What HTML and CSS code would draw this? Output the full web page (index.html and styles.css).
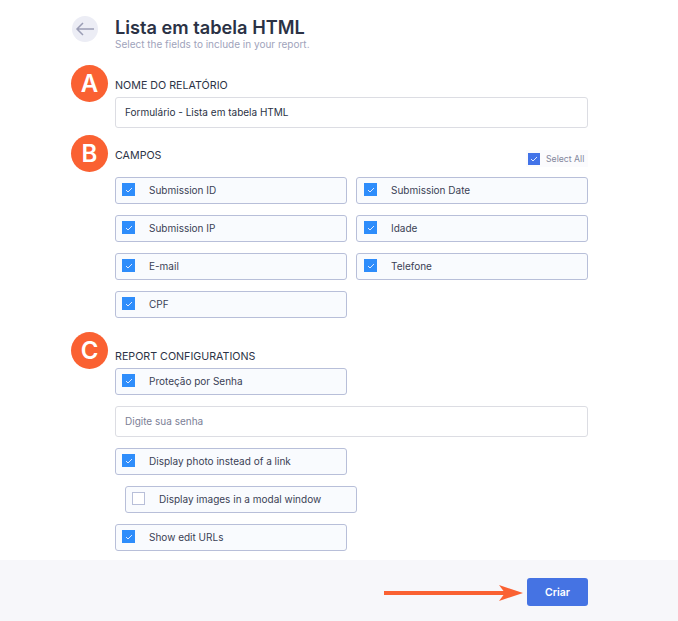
FILE: index.html
```html
<!DOCTYPE html>
<html lang="pt">
<head>
<meta charset="utf-8">
<title>Lista em tabela HTML</title>
<link rel="stylesheet" href="styles.css">
</head>
<body>
<div class="page">
  <main class="content">
    <header class="head">
      <button class="back" aria-label="Voltar">
        <svg width="20" height="14" viewBox="0 0 20 14"><path d="M19 7H2M8 1 2 7l6 6" fill="none" stroke="#9a9db5" stroke-width="1.5"/></svg>
      </button>
      <div>
        <h1 class="title">Lista em tabela HTML</h1>
        <p class="sub">Select the fields to include in your report.</p>
      </div>
    </header>

    <section class="sec sec-a">
      <span class="badge badge-a">A</span>
      <h2 class="label">NOME DO RELATÓRIO</h2>
      <div class="input">Formulário - Lista em tabela HTML</div>
    </section>

    <section class="sec sec-b">
      <span class="badge badge-b">B</span>
      <div class="label-row">
        <h2 class="label">CAMPOS</h2>
        <div class="select-all">
          <span class="box small"><svg width="8" height="6" viewBox="0 0 8 6"><path d="M1 3l2 2 4-4" fill="none" stroke="#dfe9ff" stroke-width="1"/></svg></span>
          <span>Select All</span>
        </div>
      </div>
      <div class="grid">
        <div class="opt"><span class="box"><svg width="8" height="6" viewBox="0 0 8 6"><path d="M1 3l2 2 4-4" fill="none" stroke="#dfe9ff" stroke-width="1"/></svg></span>Submission ID</div>
        <div class="opt"><span class="box"><svg width="8" height="6" viewBox="0 0 8 6"><path d="M1 3l2 2 4-4" fill="none" stroke="#dfe9ff" stroke-width="1"/></svg></span>Submission Date</div>
        <div class="opt"><span class="box"><svg width="8" height="6" viewBox="0 0 8 6"><path d="M1 3l2 2 4-4" fill="none" stroke="#dfe9ff" stroke-width="1"/></svg></span>Submission IP</div>
        <div class="opt"><span class="box"><svg width="8" height="6" viewBox="0 0 8 6"><path d="M1 3l2 2 4-4" fill="none" stroke="#dfe9ff" stroke-width="1"/></svg></span>Idade</div>
        <div class="opt"><span class="box"><svg width="8" height="6" viewBox="0 0 8 6"><path d="M1 3l2 2 4-4" fill="none" stroke="#dfe9ff" stroke-width="1"/></svg></span>E-mail</div>
        <div class="opt"><span class="box"><svg width="8" height="6" viewBox="0 0 8 6"><path d="M1 3l2 2 4-4" fill="none" stroke="#dfe9ff" stroke-width="1"/></svg></span>Telefone</div>
        <div class="opt"><span class="box"><svg width="8" height="6" viewBox="0 0 8 6"><path d="M1 3l2 2 4-4" fill="none" stroke="#dfe9ff" stroke-width="1"/></svg></span>CPF</div>
      </div>
    </section>

    <section class="sec sec-c">
      <span class="badge badge-c">C</span>
      <h2 class="label">REPORT CONFIGURATIONS</h2>
      <div class="opt single gap-s"><span class="box"><svg width="8" height="6" viewBox="0 0 8 6"><path d="M1 3l2 2 4-4" fill="none" stroke="#dfe9ff" stroke-width="1"/></svg></span>Proteção por Senha</div>
      <div class="input placeholder">Digite sua senha</div>
      <div class="opt single"><span class="box"><svg width="8" height="6" viewBox="0 0 8 6"><path d="M1 3l2 2 4-4" fill="none" stroke="#dfe9ff" stroke-width="1"/></svg></span>Display photo instead of a link</div>
      <div class="opt single nested"><span class="box empty"></span>Display images in a modal window</div>
      <div class="opt single"><span class="box"><svg width="8" height="6" viewBox="0 0 8 6"><path d="M1 3l2 2 4-4" fill="none" stroke="#dfe9ff" stroke-width="1"/></svg></span>Show edit URLs</div>
    </section>
  </main>

  <footer class="foot">
    <svg class="arrow" width="139" height="16" viewBox="0 0 139 16"><path d="M0 6h121v4H0zM115 0l24 8-24 8 6-8z" fill="#fa6132"/></svg>
    <button class="create">Criar</button>
  </footer>
</div>
</body>
</html>
```
FILE: styles.css
```css
* { box-sizing: border-box; }
html, body { margin: 0; padding: 0; background: #fff; }
body { font-family: Inter, "Open Sans", sans-serif; color: #2b3245; }
.page { width: 678px; height: 621px; position: relative; display: flex; flex-direction: column; overflow: hidden; }
.content { flex: 1; padding: 16px 90px 0 115px; position: relative; }

.head { display: flex; position: relative; height: 34px; }
.back { position: absolute; left: -43px; top: 0; width: 26px; height: 26px; border: 0; padding: 0; border-radius: 50%; background: #ecedf5; display: flex; align-items: center; justify-content: center; }
.title { margin: 0; font-size: 18.2px; line-height: 22px; font-weight: 600; color: #2b3245; }
.sub { margin: 0; font-size: 10px; line-height: 12px; color: #a0a3bb; }

.sec { position: relative; }
.sec-a { margin-top: 29px; }
.sec-b { margin-top: 21px; }
.sec-c { margin-top: 32px; }

.badge { position: absolute; left: -44px; width: 37px; height: 37px; border-radius: 50%; background: #fa6132; color: #fff; font-size: 24px; font-weight: 600; display: flex; align-items: center; justify-content: center; }
.badge-a { top: -14px; }
.badge-b { top: -14px; }
.badge-c { top: -18px; }

.label { margin: 0; font-size: 10.7px; line-height: 14px; font-weight: 400; color: #2b3245; }
.label-row { display: flex; justify-content: space-between; align-items: flex-start; height: 28px; }

.input { margin-top: 4px; height: 31px; border: 1px solid #dcdde3; border-radius: 3px; padding: 0 9px; font-size: 10px; line-height: 29px; color: #2b3245; background: #fff; }
.input.placeholder { margin-top: 11px; color: #7c8096; }

.select-all { display: flex; align-items: center; gap: 6px; margin-top: 1px; width: 62px; height: 17px; padding-left: 2px; background: #fbfbfd; font-size: 8.7px; color: #83869c; }
.select-all span:last-child { white-space: nowrap; }

.grid { display: grid; grid-template-columns: 232px 232px; column-gap: 9px; row-gap: 11px; }
.opt { height: 27px; border: 1px solid #b8bfd9; border-radius: 3px; background: #f9fbfe; padding: 0 0 2px 6px; display: flex; align-items: center; font-size: 10px; color: #3a3f55; }
.grid .opt:nth-child(even) { padding-left: 7px; }
.opt.single { width: 232px; margin-top: 11px; }
.opt.gap-s { margin-top: 4px; }
.opt.nested { margin-left: 10px; }

.box { width: 13px; height: 13px; margin-right: 14px; flex: none; background: #2e8dfb; display: flex; align-items: center; justify-content: center; }
.box.small { width: 12px; height: 12px; margin: 0; background: #4273e8; }
.box.empty { background: #fff; border: 1px solid #b8bfd9; }

.foot { height: 61px; background: #f7f7fa; display: flex; justify-content: flex-end; align-items: flex-start; padding: 18px 90px 0 0; position: relative; }
.create { width: 61px; height: 28px; border: 0; border-radius: 3px; background: #4573e3; color: #fff; font-family: inherit; font-size: 10.5px; font-weight: 600; padding: 0; }
.arrow { position: absolute; left: 384px; top: 25px; }
```
